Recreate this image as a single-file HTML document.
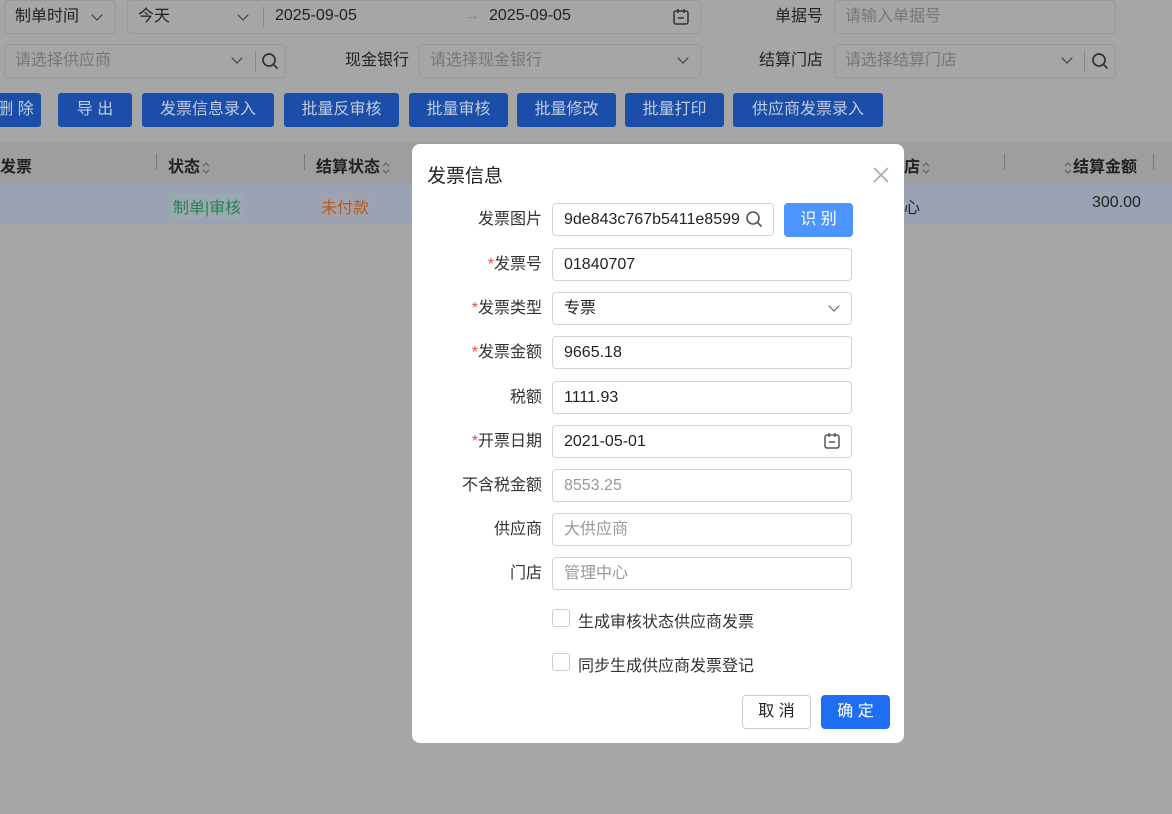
<!DOCTYPE html>
<html><head><meta charset="utf-8"><style>
*{box-sizing:border-box;margin:0;padding:0}
body{width:1172px;height:814px;overflow:hidden;background:#a6a6a6;font-family:"Liberation Sans","Noto Sans CJK SC",sans-serif;font-size:16px;color:#222;position:relative}
.a{position:absolute}
.in{position:absolute;border:1px solid #999;border-radius:4px;height:34px;background:#a6a6a6;line-height:32px;padding-left:10px;color:#222}
.ph{color:#777}
.lb{position:absolute;text-align:right;line-height:34px}
.btn{position:absolute;top:93px;height:34px;background:#1b4ea8;color:#c0cbe0;border-radius:3px;line-height:34px;text-align:center;font-size:16px}
.chev{position:absolute;width:8px;height:8px;border-right:1.6px solid #333;border-bottom:1.6px solid #333;transform:rotate(45deg)}
.dlg{position:absolute;left:412px;top:144px;width:492px;height:599px;background:#fff;border-radius:8px}
.dl{position:absolute;right:362px;width:130px;text-align:right;line-height:33px;color:#333}
.di{position:absolute;left:140px;width:300px;height:33px;border:1px solid #d4d4d4;border-radius:4px;line-height:31px;padding-left:11px;color:#222}
.r{color:#f04848}
.cb{position:absolute;left:140px;width:18px;height:18px;border:1px solid #ccc;border-radius:3px}
.ct{position:absolute;left:166px;color:#333}
.srt{display:inline-block;vertical-align:middle;margin-left:1px}
</style></head><body>
<div class="in" style="left:4px;top:0;width:112px">制单时间</div><div class="chev" style="left:93px;top:11px"></div>
<div class="in" style="left:127px;top:0;width:574px">今天</div><div class="chev" style="left:239px;top:11px"></div>
<div class="a" style="left:263px;top:7px;width:1px;height:20px;background:#888"></div>
<div class="a" style="left:275px;top:7px">2025-09-05</div>
<div class="a" style="left:464px;top:7px;color:#888">→</div>
<div class="a" style="left:489px;top:7px">2025-09-05</div>
<svg class="a" style="left:672px;top:8px" width="18" height="18" viewBox="0 0 18 18" fill="none" stroke="#333" stroke-width="1.5"><rect x="2" y="3" width="14" height="13" rx="2"/><path d="M6 1v4M12 1v4M6 10h6"/></svg>
<div class="lb" style="left:700px;width:123px;top:0">单据号</div>
<div class="in ph" style="left:834px;top:0;width:282px">请输入单据号</div>
<div class="in ph" style="left:4px;top:44px;width:282px">请选择供应商</div><div class="chev" style="left:233px;top:54px"></div>
<div class="a" style="left:255px;top:50px;width:1px;height:22px;background:#888"></div>
<svg class="a" style="left:260px;top:51px" width="20" height="20" viewBox="0 0 20 20" fill="none" stroke="#333" stroke-width="1.7"><circle cx="9" cy="9" r="6"/><path d="M13.5 13.5l4 4"/></svg>
<div class="lb" style="left:300px;width:109px;top:44px">现金银行</div>
<div class="in ph" style="left:419px;top:44px;width:282px">请选择现金银行</div><div class="chev" style="left:679px;top:54px"></div>
<div class="lb" style="left:700px;width:123px;top:44px">结算门店</div>
<div class="in ph" style="left:834px;top:44px;width:282px">请选择结算门店</div><div class="chev" style="left:1063px;top:54px"></div>
<div class="a" style="left:1084px;top:50px;width:1px;height:22px;background:#888"></div>
<svg class="a" style="left:1090px;top:51px" width="20" height="20" viewBox="0 0 20 20" fill="none" stroke="#333" stroke-width="1.7"><circle cx="9" cy="9" r="6"/><path d="M13.5 13.5l4 4"/></svg>
<div class="btn" style="left:-10px;width:51px">删 除</div>
<div class="btn" style="left:58px;width:74px">导 出</div>
<div class="btn" style="left:142px;width:132px">发票信息录入</div>
<div class="btn" style="left:284px;width:115px">批量反审核</div>
<div class="btn" style="left:409px;width:99px">批量审核</div>
<div class="btn" style="left:517px;width:99px">批量修改</div>
<div class="btn" style="left:625px;width:99px">批量打印</div>
<div class="btn" style="left:733px;width:150px">供应商发票录入</div>
<div class="a" style="left:0;top:142px;width:1172px;height:42px;background:#9e9e9e"></div>
<div class="a" style="left:0;top:184px;width:1172px;height:40px;background:#9aa2b4"></div>
<div class="a" style="left:0;top:153px;font-weight:bold">发票</div>
<div class="a" style="left:156px;top:154px;width:1px;height:16px;background:#777"></div>
<div class="a" style="left:168px;top:153px;font-weight:bold">状态<svg class="srt" width="10" height="16" viewBox="0 0 10 16" fill="none" stroke="#666" stroke-width="1.3"><path d="M2 6l3-3 3 3M2 10l3 3 3-3"/></svg></div>
<div class="a" style="left:304px;top:154px;width:1px;height:16px;background:#777"></div>
<div class="a" style="left:316px;top:153px;font-weight:bold">结算状态<svg class="srt" width="10" height="16" viewBox="0 0 10 16" fill="none" stroke="#666" stroke-width="1.3"><path d="M2 6l3-3 3 3M2 10l3 3 3-3"/></svg></div>
<div class="a" style="left:1004px;top:154px;width:1px;height:16px;background:#777"></div>
<div class="a" style="left:1062px;top:153px;font-weight:bold"><svg class="srt" width="10" height="16" viewBox="0 0 10 16" fill="none" stroke="#666" stroke-width="1.3"><path d="M2 6l3-3 3 3M2 10l3 3 3-3"/></svg>结算金额</div>
<div class="a" style="left:1153px;top:154px;width:1px;height:16px;background:#777"></div>
<div class="a" style="left:904px;top:153px;font-weight:bold">店<svg class="srt" width="10" height="16" viewBox="0 0 10 16" fill="none" stroke="#666" stroke-width="1.3"><path d="M2 6l3-3 3 3M2 10l3 3 3-3"/></svg></div>
<div class="a" style="left:170px;top:194px;color:#2e7d55;background:#98aab0;padding:0 3px">制单|审核</div>
<div class="a" style="left:318px;top:194px;color:#b65a18;background:#a2a2ae;padding:0 3px">未付款</div>
<div class="a" style="left:904px;top:194px">心</div>
<div class="a" style="left:1092px;top:194px">300.00</div>
<div class="dlg">
<div class="a" style="left:15px;top:17px;font-size:19px;color:#222">发票信息</div>
<svg class="a" style="left:460px;top:22px" width="18" height="18" viewBox="0 0 18 18" stroke="#aaa" stroke-width="1.6"><path d="M2 2l14 14M16 2L2 16"/></svg>
<div class="dl" style="top:59px">发票图片</div><div class="di" style="top:59px;width:222px;overflow:hidden;white-space:nowrap">9de843c767b5411e8599</div>
<div class="a" style="left:328px;top:60px;width:32px;height:31px;background:#fff"></div>
<svg class="a" style="left:332px;top:65px" width="20" height="20" viewBox="0 0 20 20" fill="none" stroke="#555" stroke-width="1.6"><circle cx="9" cy="9" r="6"/><path d="M13.5 13.5l4 4"/></svg>
<div class="a" style="left:372px;top:59px;width:69px;height:34px;background:#4d96ff;border-radius:4px;color:#fff;text-align:center;line-height:34px">识 别</div>
<div class="dl" style="top:104px"><span class="r">*</span>发票号</div><div class="di" style="top:104px">01840707</div>
<div class="dl" style="top:148px"><span class="r">*</span>发票类型</div><div class="di" style="top:148px">专票</div><div class="chev" style="left:418px;top:158px;border-color:#555"></div>
<div class="dl" style="top:192px"><span class="r">*</span>发票金额</div><div class="di" style="top:192px">9665.18</div>
<div class="dl" style="top:237px">税额</div><div class="di" style="top:237px">1111.93</div>
<div class="dl" style="top:281px"><span class="r">*</span>开票日期</div><div class="di" style="top:281px">2021-05-01</div>
<svg class="a" style="left:411px;top:288px" width="18" height="18" viewBox="0 0 18 18" fill="none" stroke="#555" stroke-width="1.5"><rect x="2" y="3" width="14" height="13" rx="2"/><path d="M6 1v4M12 1v4M6 10h6"/></svg>
<div class="dl" style="top:325px">不含税金额</div><div class="di" style="top:325px;color:#999">8553.25</div>
<div class="dl" style="top:369px">供应商</div><div class="di" style="top:369px;color:#999">大供应商</div>
<div class="dl" style="top:413px">门店</div><div class="di" style="top:413px;color:#999">管理中心</div>
<div class="cb" style="top:465px"></div><div class="ct" style="top:464px">生成审核状态供应商发票</div>
<div class="cb" style="top:509px"></div><div class="ct" style="top:508px">同步生成供应商发票登记</div>
<div class="a" style="left:330px;top:551px;width:69px;height:34px;border:1px solid #ccc;border-radius:4px;text-align:center;line-height:32px;color:#222">取 消</div>
<div class="a" style="left:409px;top:551px;width:69px;height:34px;background:#1f6ef2;border-radius:4px;text-align:center;line-height:34px;color:#fff">确 定</div>
</div>
</body></html>
